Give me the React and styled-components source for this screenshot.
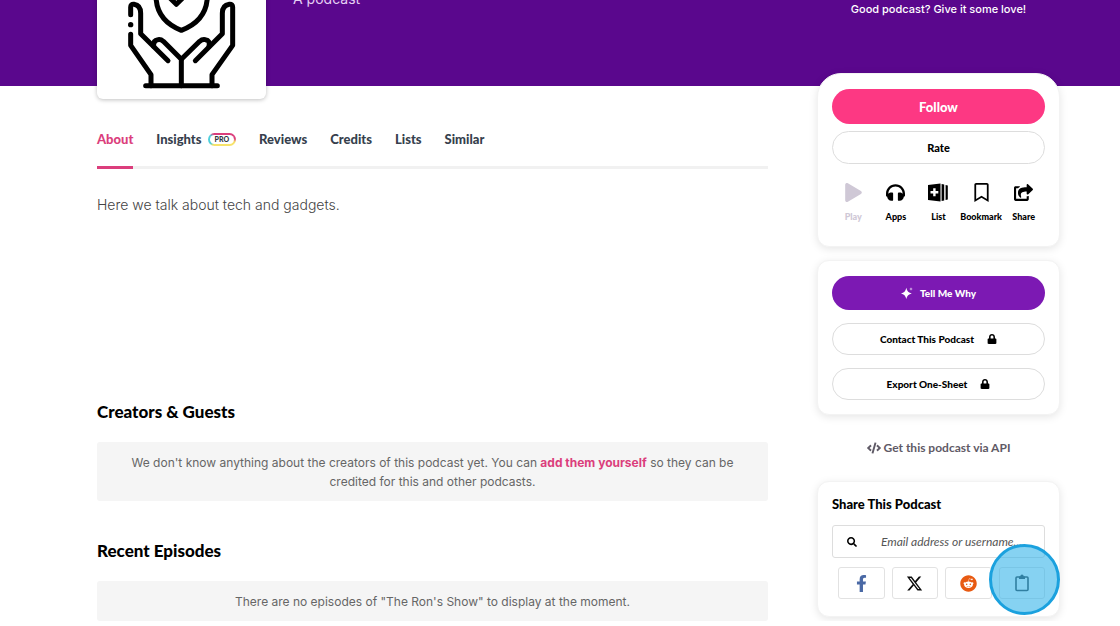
import React, { useState } from "react";
import styled, { createGlobalStyle } from "styled-components";
import {
  FaBookmark,
  FaCode,
  FaFacebookF,
  FaHeadphones,
  FaLock,
  FaPlay,
  FaReddit,
  FaRegBookmark,
  FaSearch,
  FaShareSquare
} from "react-icons/fa";
import { FaXTwitter } from "react-icons/fa6";

const tabs = ["About", "Insights", "Reviews", "Credits", "Lists", "Similar"];

function App() {
  const [active, setActive] = useState("About");
  const [saved, setSaved] = useState(false);
  const [recipient, setRecipient] = useState("");

  return (
    <>
      <GlobalStyle />
      <Banner>
        <Poster>
          <HandsArt />
        </Poster>
        <Kind>A podcast</Kind>
        <Love>Good podcast? Give it some love!</Love>
      </Banner>
      <Page>
        <Main>
          <Tabs>
            {tabs.map(tab => (
              <Tab
                key={tab}
                href={`#${tab.toLowerCase()}`}
                $active={tab === active}
                onClick={() => setActive(tab)}
              >
                {tab}
                {tab === "Insights" && <ProBadge>PRO</ProBadge>}
              </Tab>
            ))}
          </Tabs>
          <Description>Here we talk about tech and gadgets.</Description>
          <Section>
            <SectionTitle>Creators &amp; Guests</SectionTitle>
            <Notice>
              We don't know anything about the creators of this podcast yet. You
              can <a href="#creators">add them yourself</a> so they can be
              credited for this and other podcasts.
            </Notice>
          </Section>
          <Section>
            <SectionTitle>Recent Episodes</SectionTitle>
            <Notice>
              There are no episodes of "The Ron's Show" to display at the
              moment.
            </Notice>
          </Section>
        </Main>
        <Sidebar>
          <ActionCard>
            <FollowButton>Follow</FollowButton>
            <RateButton>Rate</RateButton>
            <Actions>
              <Action disabled>
                <FaPlay />
                Play
              </Action>
              <Action>
                <FaHeadphones />
                Apps
              </Action>
              <Action>
                <ListIcon />
                List
              </Action>
              <Action onClick={() => setSaved(!saved)}>
                {saved ? <FaBookmark /> : <FaRegBookmark />}
                Bookmark
              </Action>
              <Action>
                <FaShareSquare />
                Share
              </Action>
            </Actions>
          </ActionCard>
          <ToolsCard>
            <WhyButton>
              <SparkleIcon />
              Tell Me Why
            </WhyButton>
            <OutlineButton>
              Contact This Podcast
              <FaLock />
            </OutlineButton>
            <OutlineButton>
              Export One-Sheet
              <FaLock />
            </OutlineButton>
          </ToolsCard>
          <ApiLink href="#api">
            <FaCode />
            Get this podcast via API
          </ApiLink>
          <ShareCard>
            <ShareTitle>Share This Podcast</ShareTitle>
            <SearchBox>
              <FaSearch />
              <input
                aria-label="Email address or username"
                placeholder="Email address or username..."
                value={recipient}
                onChange={e => setRecipient(e.target.value)}
              />
            </SearchBox>
            <Networks>
              <Network aria-label="Share on Facebook" $color="#4a69a5">
                <FaFacebookF />
              </Network>
              <Network aria-label="Share on X" $color="#0b0b0b">
                <FaXTwitter />
              </Network>
              <Network aria-label="Share on Reddit" $color="#e85a12">
                <FaReddit />
              </Network>
              <Network aria-label="Copy link" $color="#333b40">
                <ClipboardIcon />
              </Network>
            </Networks>
            <Spotlight />
          </ShareCard>
        </Sidebar>
      </Page>
    </>
  );
}

export default App;

function HandsArt() {
  return (
    <svg
      viewBox="51 -210 507 507"
      fill="none"
      stroke="#000"
      strokeWidth="15"
      strokeLinecap="round"
      strokeLinejoin="round"
    >
      <path d="M304 -150 Q270 -118 228 -112 V-10 Q230 62 304 91 Q380 62 382 -10 V-112 Q338 -118 304 -150Z" />
      <path d="M256 -20 L289 13 L344 -42" />
      <path d="M152 44 V22 Q152 12 162 13 Q182 16 182 40 V101 L264 182" />
      <path d="M152 103 V136 L213 224 V257" />
      <path d="M221 139 Q219 121 234 119 Q242 117 250 124 L304 178 V257" />
      <path d="M396 257 V224 L458 136 V22 Q458 12 448 13 Q427 16 427 40 V101 L346 182" />
      <path d="M387 139 Q391 121 376 119 Q367 117 359 124 L304 178" />
      <path d="M197 257 H412" />
      <circle cx="152" cy="74" r="8" fill="#000" stroke="none" />
    </svg>
  );
}

function ListIcon() {
  return (
    <svg viewBox="0 0 20 18" width="20" height="18">
      <path
        fillRule="evenodd"
        d="M0 1.5 L12.5 0 V18 L0 16.5Z M5.2 4.8 V7.6 H2.5 V10 H5.2 V12.8 H7.6 V10 H10.3 V7.6 H7.6 V4.8Z"
      />
      <path d="M13.6 0.6 L16.2 1 V17 L13.6 17.4Z M17.6 1.6 L19.8 1.9 V16.1 L17.6 16.4Z" />
    </svg>
  );
}

function SparkleIcon() {
  return (
    <svg viewBox="0 0 12 12" width="12" height="12">
      <path d="M5.3 0.8 Q6.2 5.7 10.8 6.6 Q6.2 7.5 5.3 12 Q4.4 7.5 0 6.6 Q4.4 5.7 5.3 0.8Z" />
      <path
        d="M10 0.2 Q10.2 1.8 11.8 2 Q10.2 2.2 10 3.8 Q9.8 2.2 8.2 2 Q9.8 1.8 10 0.2Z"
        opacity="0.7"
      />
    </svg>
  );
}

function ClipboardIcon() {
  return (
    <svg viewBox="0 0 14 18" width="14" height="18">
      <rect
        x="1"
        y="3"
        width="12"
        height="13.5"
        rx="1"
        fill="none"
        stroke="currentColor"
        strokeWidth="1.6"
      />
      <path d="M4 2.4 H5.2 Q5.4 0.6 7 0.6 Q8.6 0.6 8.8 2.4 H10 V5 H4Z" />
    </svg>
  );
}

const GlobalStyle = createGlobalStyle`
  *, *::before, *::after {
    box-sizing: border-box;
  }
  body {
    margin: 0;
    background-color: #fff;
    color: #000;
    font-family: Inter, "Liberation Sans", sans-serif;
  }
  button, input {
    font-family: inherit;
  }
  button {
    cursor: pointer;
  }
  a {
    text-decoration: none;
  }
  svg {
    fill: currentColor;
    flex-shrink: 0;
  }
`;

const Banner = styled.header`
  display: flex;
  align-items: flex-end;
  height: 86px;
  padding: 0 60px 0 97px;
  background-color: #5a078d;
  color: #fff;
`;

const Poster = styled.div`
  flex-shrink: 0;
  width: 169px;
  height: 169px;
  margin-bottom: -13px;
  border-radius: 6px;
  background-color: #fff;
  box-shadow: 0 1px 4px rgba(0, 0, 0, 0.25);

  svg {
    display: block;
    width: 100%;
    fill: none;
  }
`;

const Kind = styled.p`
  flex: 1;
  margin: 0 0 77px 27px;
  color: #e4cff3;
  font-size: 14px;
  line-height: 20px;
`;

const Love = styled.p`
  width: 243px;
  margin: 0 0 67px;
  font-size: 11px;
  font-weight: 500;
  line-height: 20px;
  text-align: center;
`;

const Page = styled.div`
  display: grid;
  grid-template-columns: minmax(0, 1fr) 243px;
  column-gap: 49px;
  padding: 0 60px 0 97px;
`;

const Main = styled.main`
  padding-top: 43px;
`;

const Tabs = styled.nav`
  display: flex;
  gap: 23px;
  box-shadow: inset 0 -3px #f1f1f1;
`;

const Tab = styled.a`
  display: flex;
  align-items: center;
  padding-bottom: 17px;
  border-bottom: 3px solid ${props => (props.$active ? "#db3e7c" : "transparent")};
  color: ${props => (props.$active ? "#db3e7c" : "#363f4d")};
  font-family: Lato, sans-serif;
  font-size: 13px;
  font-weight: 900;
  line-height: 20px;
`;

const ProBadge = styled.span`
  margin-left: 6px;
  padding: 0 5px;
  border: 2px solid transparent;
  border-radius: 7px;
  background: linear-gradient(#fff, #fff) padding-box,
    conic-gradient(#db3e7c 24%, #f7e36a 28%, #f7e36a 66%, #4fd0dc 70%, #4fd0dc 80%, #db3e7c 84%)
      border-box;
  color: #2f3542;
  font-size: 7px;
  line-height: 9px;
`;

const Description = styled.p`
  min-height: 170px;
  margin: 24px 0 37px;
  color: #444;
  font-size: 14px;
  font-weight: 300;
  line-height: 24px;
`;

const Section = styled.section`
  margin-bottom: 38px;

  &:last-child {
    margin-bottom: 0;
  }
`;

const SectionTitle = styled.h2`
  margin: 0 0 18px;
  font-family: Lato, sans-serif;
  font-size: 17px;
  font-weight: 900;
  line-height: 24px;
`;

const Notice = styled.p`
  margin: 0;
  padding: 11px 24px 10px;
  border-radius: 3px;
  background-color: #f5f5f5;
  color: #666;
  font-size: 12px;
  line-height: 19px;
  text-align: center;

  a {
    color: #db3e7c;
    font-weight: 700;
  }
`;

const Sidebar = styled.aside`
  display: flex;
  flex-direction: column;
  margin-top: -13px;
  font-family: Lato, sans-serif;
`;

const Card = styled.section`
  display: flex;
  flex-direction: column;
  padding: 15px;
  border: 1px solid #f3f3f3;
  border-radius: 12px;
  background-color: #fff;
  box-shadow: 0 2px 8px rgba(0, 0, 0, 0.1);
`;

const ActionCard = styled(Card)`
  gap: 7px;
  padding: 15px 14px 23px;
  border-radius: 24px 24px 12px 12px;
`;

const ToolsCard = styled(Card)`
  gap: 13px;
  margin-top: 13px;
  padding: 15px 14px 14px;
`;

const PillButton = styled.button`
  display: flex;
  align-items: center;
  justify-content: center;
  height: 32px;
  padding: 0 16px;
  border: 0;
  border-radius: 18px;
  font-size: 10px;
  font-weight: 900;
`;

const FollowButton = styled(PillButton)`
  height: 35px;
  background-color: #fd3883;
  color: #fff;
  font-size: 13px;
`;

const WhyButton = styled(PillButton)`
  gap: 7px;
  height: 34px;
  background-color: #7c19b3;
  color: #fff;
`;

const OutlineButton = styled(PillButton)`
  gap: 13px;
  border: 1px solid #ddd;
  background-color: #fff;
  color: #000;
`;

const RateButton = styled(OutlineButton)`
  height: 33px;
  font-size: 11px;
`;

const Actions = styled.div`
  display: grid;
  grid-template-columns: repeat(5, 1fr);
  margin-top: 12px;
`;

const Action = styled.button`
  display: flex;
  flex-direction: column;
  align-items: center;
  gap: 9px;
  min-width: 0;
  padding: 0;
  border: 0;
  background: none;
  color: #000;
  font-size: 9px;
  font-weight: 900;
  line-height: 12px;

  &:disabled {
    color: #cfc8d6;
  }

  svg {
    height: 19px;
    font-size: 19px;
  }
`;

const ApiLink = styled.a`
  display: flex;
  align-items: center;
  justify-content: center;
  gap: 3px;
  margin: 23px 0;
  color: #5f5a66;
  font-size: 12px;
  font-weight: 700;
  line-height: 20px;

  svg {
    font-size: 14px;
  }
`;

const ShareCard = styled(Card)`
  position: relative;
  padding: 12px 14px 17px;
`;

const ShareTitle = styled.h3`
  margin: 0 0 11px;
  font-size: 13px;
  font-weight: 900;
  line-height: 20px;
`;

const SearchBox = styled.label`
  display: flex;
  align-items: center;
  gap: 24px;
  height: 33px;
  padding: 0 12px 0 14px;
  border: 1px solid #ddd;
  border-radius: 3px;

  svg {
    font-size: 10px;
  }

  input {
    flex: 1;
    min-width: 0;
    padding: 0;
    border: 0;
    outline: 0;
    background: none;
    font-size: 12px;
  }

  input::placeholder {
    color: #555;
    font-style: italic;
    opacity: 1;
  }
`;

const Networks = styled.div`
  display: grid;
  grid-template-columns: repeat(4, 1fr);
  gap: 7px;
  margin-top: 9px;
  padding-left: 6px;
`;

const Network = styled.button`
  display: flex;
  align-items: center;
  justify-content: center;
  height: 32px;
  padding: 0;
  border: 1px solid #e2e2e2;
  border-radius: 3px;
  background-color: #fff;
  color: ${props => props.$color};
  font-size: 17px;
`;

const Spotlight = styled.div`
  position: absolute;
  right: -1px;
  bottom: 1px;
  width: 71px;
  height: 71px;
  border: 3px solid #1ba1de;
  border-radius: 50%;
  background-color: rgba(47, 177, 232, 0.58);
  pointer-events: none;
`;
